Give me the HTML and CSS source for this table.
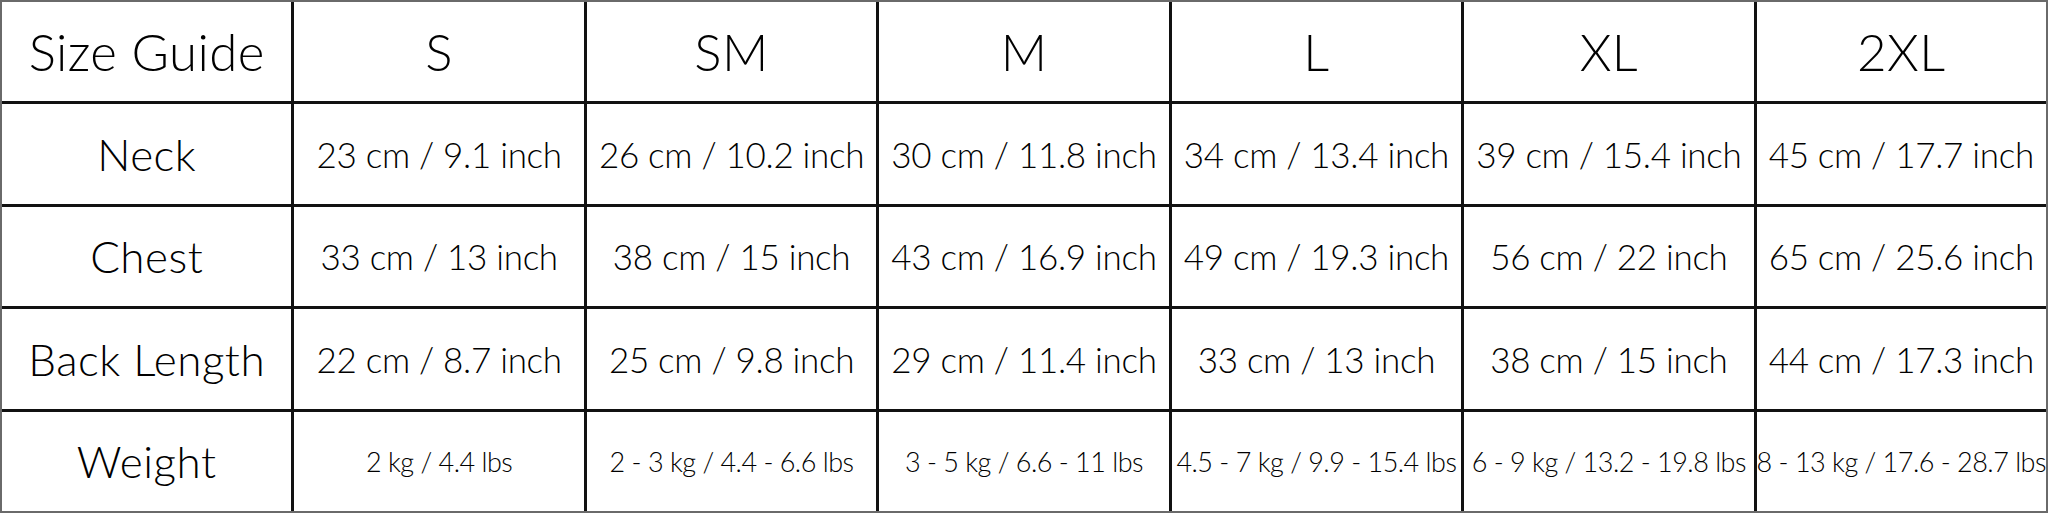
FILE: index.html
```html
<!DOCTYPE html>
<html lang="en">
<head>
<meta charset="utf-8">
<title>Size Guide</title>
<link rel="stylesheet" href="styles.css">
</head>
<body>
<div class="chart">
  <div class="cell head label">Size Guide</div>
  <div class="cell head">S</div>
  <div class="cell head">SM</div>
  <div class="cell head">M</div>
  <div class="cell head">L</div>
  <div class="cell head">XL</div>
  <div class="cell head">2XL</div>

  <div class="cell label">Neck</div>
  <div class="cell">23 cm / 9.1 inch</div>
  <div class="cell">26 cm / 10.2 inch</div>
  <div class="cell">30 cm / 11.8 inch</div>
  <div class="cell">34 cm / 13.4 inch</div>
  <div class="cell">39 cm / 15.4 inch</div>
  <div class="cell">45 cm / 17.7 inch</div>

  <div class="cell label">Chest</div>
  <div class="cell">33 cm / 13 inch</div>
  <div class="cell">38 cm / 15 inch</div>
  <div class="cell">43 cm / 16.9 inch</div>
  <div class="cell">49 cm / 19.3 inch</div>
  <div class="cell">56 cm / 22 inch</div>
  <div class="cell">65 cm / 25.6 inch</div>

  <div class="cell label">Back Length</div>
  <div class="cell">22 cm / 8.7 inch</div>
  <div class="cell">25 cm / 9.8 inch</div>
  <div class="cell">29 cm / 11.4 inch</div>
  <div class="cell">33 cm / 13 inch</div>
  <div class="cell">38 cm / 15 inch</div>
  <div class="cell">44 cm / 17.3 inch</div>

  <div class="cell label">Weight</div>
  <div class="cell small">2 kg / 4.4 lbs</div>
  <div class="cell small">2 - 3 kg / 4.4 - 6.6 lbs</div>
  <div class="cell small">3 - 5 kg / 6.6 - 11 lbs</div>
  <div class="cell small">4.5 - 7 kg / 9.9 - 15.4 lbs</div>
  <div class="cell small">6 - 9 kg / 13.2 - 19.8 lbs</div>
  <div class="cell small">8 - 13 kg / 17.6 - 28.7 lbs</div>
</div>
</body>
</html>
```

FILE: styles.css
```css
html, body {
  margin: 0;
  padding: 0;
  background: #ffffff;
}

.chart {
  box-sizing: border-box;
  width: 2048px;
  height: 513px;
  display: grid;
  grid-template-columns: repeat(7, 1fr);
  grid-template-rows: repeat(5, 1fr);
  gap: 3px;
  background: #111111;
  border: 2px solid #6a6a6a;
  font-family: "Lato", "Liberation Sans", sans-serif;
  font-weight: 300;
  color: #000000;
}

.cell {
  background: #ffffff;
  display: flex;
  align-items: center;
  justify-content: center;
  white-space: nowrap;
  font-size: 35px;
  letter-spacing: -0.3px;
}

.label {
  font-size: 44px;
  letter-spacing: 0.5px;
}

.head {
  font-size: 51px;
  letter-spacing: 0.4px;
}

.small {
  font-size: 27px;
  letter-spacing: -0.5px;
}
```
